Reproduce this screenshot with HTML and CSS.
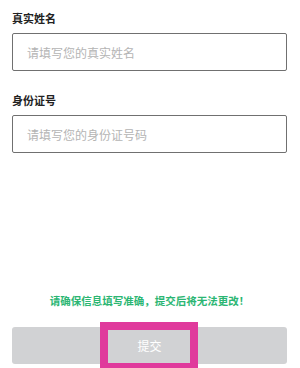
FILE: index.html
```html
<!DOCTYPE html>
<html lang="zh-CN">
<head>
  <meta charset="UTF-8">
  <meta name="viewport" content="width=device-width, initial-scale=1.0">
  <title>实名认证</title>
  <link rel="stylesheet" href="styles.css">
</head>
<body>
  <form class="form">
    <div class="field">
      <label for="realName">真实姓名</label>
      <input type="text" id="realName" placeholder="请填写您的真实姓名">
    </div>

    <div class="field">
      <label for="idNumber">身份证号</label>
      <input type="text" id="idNumber" placeholder="请填写您的身份证号码">
    </div>

    <p class="notice">请确保信息填写准确，提交后将无法更改！</p>

    <button type="button" class="submit" disabled>提交</button>
  </form>

  <div class="highlight"></div>
</body>
</html>
```

FILE: styles.css
```css
html, body {
  margin: 0;
  padding: 0;
  height: 368px;
  overflow: hidden;
}
body {
  font-family: "Noto Sans CJK SC", "Noto Sans", sans-serif;
  background-color: #fff;
  color: #222;
  position: relative;
}
.form {
  padding: 10px 13px 0 12px;
}
.field {
  margin-bottom: 21px;
}
label {
  display: block;
  font-size: 11px;
  font-weight: 700;
  line-height: 16px;
  margin-bottom: 7px;
}
input[type="text"] {
  display: block;
  box-sizing: border-box;
  width: 100%;
  height: 38px;
  padding: 0 14px;
  border: 1px solid #707070;
  border-radius: 2px;
  font-family: inherit;
  font-size: 12px;
  color: #333;
  outline: none;
}
input::placeholder {
  color: #b4b4b4;
}
.notice {
  margin: 140px 0 0;
  text-align: center;
  font-size: 10.5px;
  font-weight: 700;
  line-height: 16px;
  color: #2bb673;
}
.submit {
  display: block;
  width: 100%;
  height: 37px;
  margin-top: 18px;
  border: none;
  border-radius: 3px;
  background-color: #d1d2d4;
  color: #fff;
  font-family: inherit;
  font-size: 12px;
}
.highlight {
  position: absolute;
  left: 100px;
  top: 322px;
  width: 98px;
  height: 49px;
  box-sizing: border-box;
  border: 8px solid #e03a9c;
}
```
